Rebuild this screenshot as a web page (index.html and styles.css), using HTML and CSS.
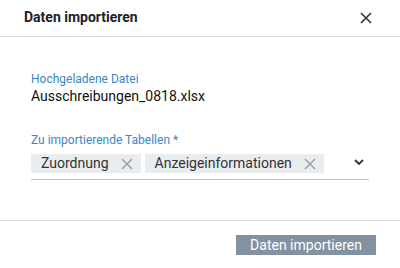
FILE: index.html
```html
<!DOCTYPE html>
<html lang="de">

<head>
    <title>Daten importieren</title>
    <link rel="stylesheet" href="styles.css">
</head>

<body>
    <div class="dialog">
        <div class="dialog-header">
            <span class="dialog-title">Daten importieren</span>
            <button class="close-btn" type="button">
                <svg width="12" height="12" viewBox="0 0 12 12">
                    <path d="M1 1L11 11M11 1L1 11" stroke="#333" stroke-width="1.6" fill="none"/>
                </svg>
            </button>
        </div>

        <div class="dialog-content">
            <div class="field-label">Hochgeladene Datei</div>
            <div class="file-name">Ausschreibungen_0818.xlsx</div>

            <div class="field-label tables-label">Zu importierende Tabellen *</div>
            <div class="chip-field">
                <span class="chip">Zuordnung
                    <svg class="chip-x" width="12" height="12" viewBox="0 0 12 12">
                        <path d="M1 1L11 11M11 1L1 11" stroke="#9aa1a8" stroke-width="1.5" fill="none"/>
                    </svg>
                </span>
                <span class="chip">Anzeigeinformationen
                    <svg class="chip-x" width="12" height="12" viewBox="0 0 12 12">
                        <path d="M1 1L11 11M11 1L1 11" stroke="#9aa1a8" stroke-width="1.5" fill="none"/>
                    </svg>
                </span>
                <svg class="chevron" width="10" height="6" viewBox="0 0 10 6">
                    <path d="M1 1L5 5L9 1" stroke="#333" stroke-width="1.8" fill="none"/>
                </svg>
            </div>
        </div>

        <div class="dialog-footer">
            <button class="import-btn" type="button">Daten importieren</button>
        </div>
    </div>
</body>

</html>
```

FILE: styles.css
```css
body {
    margin: 0;
    background-color: white;
    font-family: Roboto, "Liberation Sans", sans-serif;
    color: #222;
}

.dialog {
    width: 400px;
    height: 268px;
    display: flex;
    flex-direction: column;
}

.dialog-header {
    height: 34px;
    padding: 0 28px 2px 24px;
    display: flex;
    align-items: center;
    justify-content: space-between;
    border-bottom: 1px solid #dcdcdc;
}

.dialog-title {
    font-size: 14px;
    font-weight: 700;
    color: #222;
}

.close-btn {
    border: none;
    background: none;
    padding: 0;
    width: 12px;
    height: 12px;
    display: flex;
    margin-top: 2px;
}

.dialog-content {
    flex: 1;
    padding: 35px 31px 0;
}

.field-label {
    font-size: 12px;
    line-height: 14px;
    color: #3b86c6;
}

.file-name {
    font-size: 14px;
    line-height: 18px;
    margin-top: 1px;
    color: #111;
}

.tables-label {
    margin-top: 28px;
}

.chip-field {
    margin-top: 7px;
    padding-bottom: 6px;
    border-bottom: 1px solid #bdbdbd;
    display: flex;
    align-items: center;
    gap: 4px;
}

.chip {
    display: flex;
    align-items: center;
    height: 19px;
    line-height: 19px;
    padding: 0 8px 0 10px;
    background-color: #e9edf0;
    font-size: 14px;
    color: #333;
}

.chip-x {
    margin-left: 12px;
}

.chevron {
    margin-left: auto;
    margin-right: 5px;
    margin-bottom: 3px;
}

.dialog-footer {
    border-top: 1px solid #dcdcdc;
    padding: 14px 24px 13px;
    display: flex;
    justify-content: flex-end;
}

.import-btn {
    width: 140px;
    height: 20px;
    padding: 0;
    border: none;
    background-color: #8392a0;
    color: white;
    font-family: Roboto, "Liberation Sans", sans-serif;
    font-size: 14px;
    line-height: 20px;
}
```
